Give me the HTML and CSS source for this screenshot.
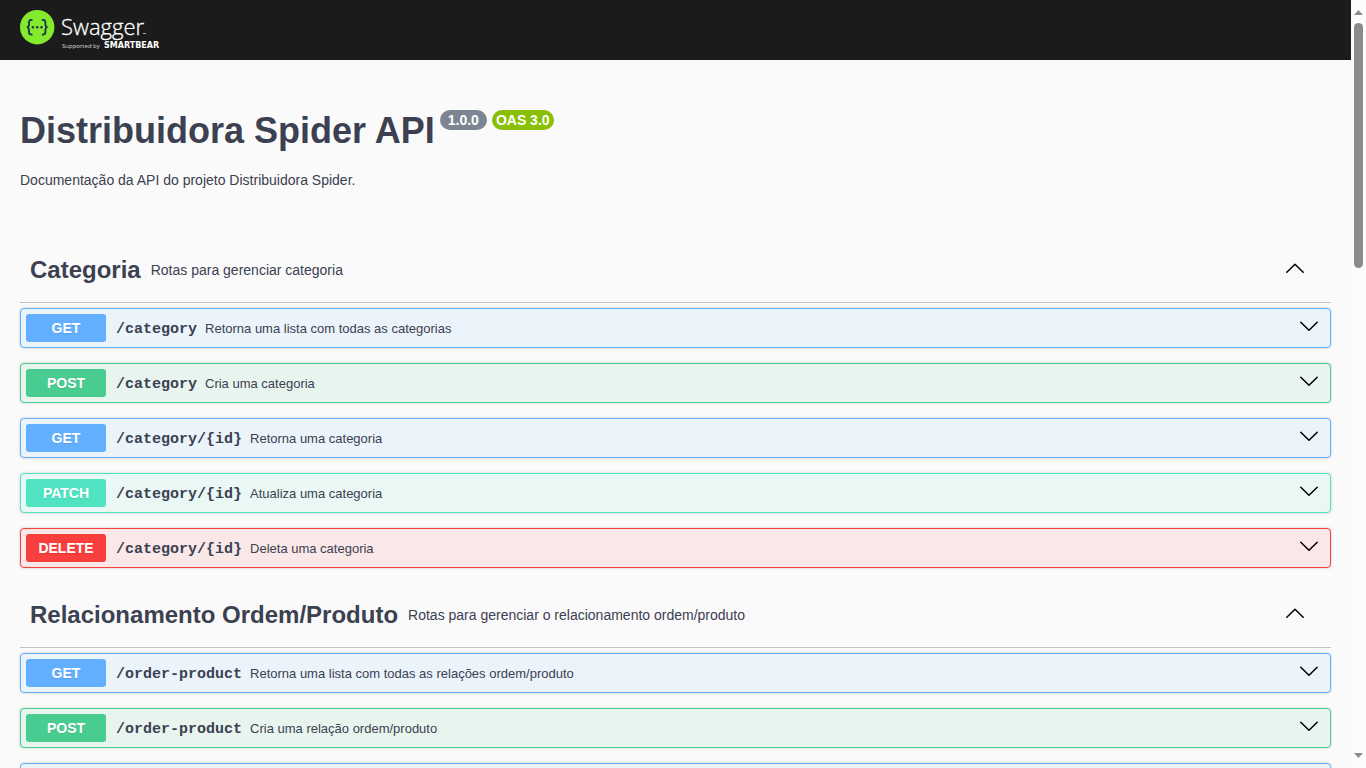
FILE: index.html
```html
<!DOCTYPE html>
<html lang="pt-BR">
<head>
<meta charset="utf-8">
<meta name="viewport" content="width=device-width, initial-scale=1">
<title>Distribuidora Spider API</title>
<link rel="stylesheet" href="styles.css">
</head>
<body>
<svg class="symbols" aria-hidden="true">
  <symbol id="arrow-up" viewBox="0 0 20 20"><path d="M1.8 12.3 10 4.2l8.200 8.100" fill="none" stroke="#000" stroke-width="1.500" stroke-linecap="round" stroke-linejoin="round"/></symbol>
  <symbol id="arrow-down" viewBox="0 0 20 20"><path d="M1.8 4.300 10 12.300l8.200-8" fill="none" stroke="#000" stroke-width="1.500" stroke-linecap="round" stroke-linejoin="round"/></symbol>
</svg>
<div class="viewport">
  <div class="page">
    <header class="topbar">
      <a class="logo" href="#" aria-label="Swagger">
        <svg width="150" height="40" viewBox="0 0 150 40">
          <circle cx="17.200" cy="17.200" r="17.200" fill="#85ea2d"/>
          <g fill="none" stroke="#173647" stroke-width="1.800">
            <path d="M12.500 9.800h-1c-1.800 0-2.500.9-2.500 2.500v2.300c0 1.500-.6 2.300-2 2.600 1.400.3 2 1.100 2 2.600v2.300c0 1.600.7 2.500 2.500 2.500h1"/>
            <path d="M21.900 9.800h1c1.800 0 2.500.9 2.500 2.500v2.300c0 1.500.6 2.300 2 2.600-1.400.3-2 1.100-2 2.600v2.300c0 1.600-.7 2.500-2.500 2.500h-1"/>
          </g>
          <g fill="#173647"><circle cx="12.900" cy="17.200" r="1.200"/><circle cx="17.200" cy="17.200" r="1.200"/><circle cx="21.500" cy="17.200" r="1.200"/></g>
          <text class="logo-name" x="41" y="25">Swagger</text>
          <path d="M123 23.500h3" stroke="#aaa" stroke-width="1"/>
          <text class="logo-by" x="42" y="38">Supported by</text>
          <text class="logo-brand" x="84" y="38">SMARTBEAR</text>
        </svg>
      </a>
    </header>
    <main class="content">
      <section class="info">
        <div class="title-row">
          <h1 class="title">Distribuidora Spider API</h1>
          <span class="badge">1.0.0</span>
          <span class="badge badge-oas">OAS 3.0</span>
        </div>
        <p class="about">Documentação da API do projeto Distribuidora Spider.</p>
      </section>

      <section class="tag">
        <div class="tag-header">
          <h2 class="tag-name">Categoria</h2>
          <p class="tag-text">Rotas para gerenciar categoria</p>
          <button class="toggle" aria-label="Recolher Categoria"><svg class="arrow"><use href="#arrow-up"/></svg></button>
        </div>
        <button class="op get"><span class="method">GET</span><span class="path">/category</span><span class="summary">Retorna uma lista com todas as categorias</span><svg class="arrow"><use href="#arrow-down"/></svg></button>
        <button class="op post"><span class="method">POST</span><span class="path">/category</span><span class="summary">Cria uma categoria</span><svg class="arrow"><use href="#arrow-down"/></svg></button>
        <button class="op get"><span class="method">GET</span><span class="path">/category/{id}</span><span class="summary">Retorna uma categoria</span><svg class="arrow"><use href="#arrow-down"/></svg></button>
        <button class="op patch"><span class="method">PATCH</span><span class="path">/category/{id}</span><span class="summary">Atualiza uma categoria</span><svg class="arrow"><use href="#arrow-down"/></svg></button>
        <button class="op delete"><span class="method">DELETE</span><span class="path">/category/{id}</span><span class="summary">Deleta uma categoria</span><svg class="arrow"><use href="#arrow-down"/></svg></button>
      </section>

      <section class="tag">
        <div class="tag-header">
          <h2 class="tag-name">Relacionamento Ordem/Produto</h2>
          <p class="tag-text">Rotas para gerenciar o relacionamento ordem/produto</p>
          <button class="toggle" aria-label="Recolher Relacionamento Ordem/Produto"><svg class="arrow"><use href="#arrow-up"/></svg></button>
        </div>
        <button class="op get"><span class="method">GET</span><span class="path">/order-product</span><span class="summary">Retorna uma lista com todas as relações ordem/produto</span><svg class="arrow"><use href="#arrow-down"/></svg></button>
        <button class="op post"><span class="method">POST</span><span class="path">/order-product</span><span class="summary">Cria uma relação ordem/produto</span><svg class="arrow"><use href="#arrow-down"/></svg></button>
        <div class="op get"></div>
      </section>
    </main>
  </div>
  <div class="scrollbar" aria-hidden="true">
    <svg width="9" height="5" viewBox="0 0 9 5"><path d="M4.500 0 9 5H0z" fill="#8b8b8b"/></svg>
    <div class="track"><div class="thumb"></div></div>
    <svg width="9" height="5" viewBox="0 0 9 5"><path d="M0 0h9L4.500 5z" fill="#8b8b8b"/></svg>
  </div>
</div>
</body>
</html>
```
FILE: styles.css
```css
* { box-sizing: border-box; }
body {
  margin: 0;
  background: #fafafa;
  color: #3b4151;
  font-family: "Liberation Sans", Arial, sans-serif;
  font-size: 14px;
}
h1, h2, p { margin: 0; }
button { font: inherit; color: inherit; cursor: pointer; }
.symbols { display: none; }
.viewport { display: flex; height: 100vh; overflow: hidden; }
.page { flex: 1; min-width: 0; overflow: hidden; }

.topbar { display: flex; background: #1b1b1b; padding: 10px 20px; }
.logo { display: flex; }
.logo text { fill: #fff; }
.logo-name { font: 300 22px "Open Sans", sans-serif; stroke: #fff; stroke-width: .3px; }
.logo .logo-by { font: 6px "Open Sans", sans-serif; fill: #ddd; }
.logo-brand { font: bold 8px "DejaVu Sans", sans-serif; }

.content { padding: 0 20px; }
.info { padding: 50px 0 48px; }
.title-row { display: flex; align-items: flex-start; gap: 5px; }
.title { font-size: 36px; line-height: 42px; }
.badge {
  padding: 0 8px;
  border-radius: 10px;
  background: #7d8492;
  color: #fff;
  font-weight: bold;
  line-height: 20px;
}
.badge-oas { background: #89bf04; padding: 0 4px; }
.about { margin-top: 18px; line-height: 20px; }

.tag { display: flex; flex-direction: column; gap: 15px; margin-bottom: 15px; }
.tag-header {
  display: flex;
  align-items: center;
  gap: 10px;
  min-height: 65px;
  margin-bottom: -10px;
  padding: 0 26px 0 10px;
  border-bottom: 1px solid rgba(59, 65, 81, .3);
}
.tag-name { font-size: 24px; line-height: 28px; }
.tag-text { flex: 1; }
.toggle { display: flex; padding: 0; border: 0; background: none; }
.arrow { width: 20px; height: 20px; flex: none; }

.op {
  display: flex;
  align-items: center;
  min-height: 40px;
  padding: 5px 11px 5px 5px;
  border: 1px solid var(--tone);
  border-radius: 4px;
  background: var(--tint);
  box-shadow: 0 0 3px rgba(0, 0, 0, .19);
  text-align: left;
}
.get { --tone: #61affe; --tint: #ebf3fb; }
.post { --tone: #49cc90; --tint: #e8f5ef; }
.patch { --tone: #50e3c2; --tint: #e9f8f4; }
.delete { --tone: #f93e3e; --tint: #fae7e7; }
.method {
  width: 80px;
  border-radius: 3px;
  background: var(--tone);
  color: #fff;
  font-weight: bold;
  line-height: 28px;
  text-align: center;
  text-shadow: 0 1px 0 rgba(0, 0, 0, .1);
}
.path {
  padding: 2px 8px 0 10px;
  font: bold 15px "Liberation Mono", monospace;
}
.summary { flex: 1; font-size: 13px; }

.scrollbar {
  display: flex;
  flex-direction: column;
  align-items: center;
  gap: 8px;
  width: 15px;
  padding: 10px 0;
  background: #fcfcfc;
}
.track { flex: 1; width: 9px; }
.thumb { height: 34%; border-radius: 5px; background: #8b8b8b; }
```
